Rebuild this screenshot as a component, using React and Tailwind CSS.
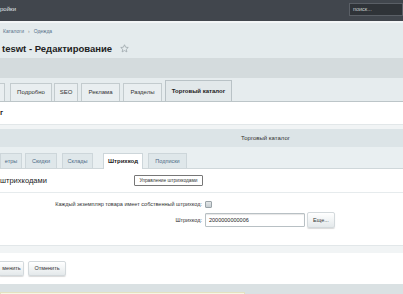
import React from "react";

const topTabs = [
  { label: "", w: "w-[20px]", ml: "-ml-[15px]" },
  { label: "Подробно", w: "w-[42px]", ml: "ml-[5px]" },
  { label: "SEO", w: "w-[24px]", ml: "ml-[2px]" },
  { label: "Реклама", w: "w-[39px]", ml: "ml-[3px]" },
  { label: "Разделы", w: "w-[39px]", ml: "ml-[3px]" },
];

const innerTabs = [
  { label: "етры", w: "w-[22px]", ml: "ml-0" },
  { label: "Скидки", w: "w-[32px]", ml: "ml-[3px]" },
  { label: "Склады", w: "w-[31px]", ml: "ml-[5px]" },
];

const Tab = ({ label, w, ml }) => (
  <div
    className={`${w} ${ml} h-[18px] flex items-center justify-center border border-b-0 border-[#c3cbce] bg-[#e9eef0] text-[6px] text-[#333]`}
  >
    {label}
  </div>
);

const InnerTab = ({ label, w, ml }) => (
  <div
    className={`${w} ${ml} h-[15px] flex items-center justify-center border border-b-0 border-[#cdd6da] bg-[#dfe7ea] text-[5.5px] text-[#4d6a86]`}
  >
    {label}
  </div>
);

const SmallButton = ({ children, className }) => (
  <div
    className={`${className} flex items-center justify-center rounded-[2px] border border-[#d3d9dc] bg-gradient-to-b from-[#ffffff] to-[#e4e9eb] text-[5.5px] text-[#333] shadow-[0_1px_1px_rgba(0,0,0,0.15)]`}
  >
    {children}
  </div>
);

export default function App() {
  return (
    <div
      className="w-[403px] h-[294px] overflow-hidden bg-[#e4ebed]"
      style={{ fontFamily: '"Liberation Sans", Arial, sans-serif' }}
    >
      {/* top bar */}
      <div className="h-[21px] bg-[#41464d] flex items-center justify-between">
        <span className="text-[6px] text-[#e0e3e6] pl-0 -mt-[2px]">ройки</span>
        <div className="w-[54px] h-[13px] -mt-[2px] bg-[#2f3338] border border-[#5a5f66] flex items-center pl-[3px] text-[5.5px] text-[#c8ccd0]">
          поиск...
        </div>
      </div>
      <div className="h-[2px] bg-[#f3f6f7]" />

      {/* header */}
      <div className="h-[35px] pl-[3px] pt-[5px]">
        <div className="flex items-center gap-[4px] text-[5px] text-[#56718a]">
          <span>Каталоги</span>
          <span className="text-[#888]">›</span>
          <span>Одежда</span>
        </div>
        <div className="flex items-center mt-[6px] -ml-[1px]">
          <span className="text-[9.5px] font-bold text-[#222]">teswt - Редактирование</span>
          <svg className="ml-[8px]" width="9" height="9" viewBox="0 0 24 24" fill="none" stroke="#9aa3a8" strokeWidth="2">
            <path d="M12 2l3 6.5 7 .8-5.2 4.8 1.5 7L12 17.5 5.7 21.1l1.5-7L2 9.3l7-.8z" />
          </svg>
        </div>
      </div>

      <div className="h-[20px] bg-[#d4dbdd]" />

      {/* tabs */}
      <div className="h-[23px] flex items-end bg-[#e6ecee]">
        {topTabs.map((t, i) => (
          <Tab key={i} {...t} />
        ))}
        <div className="w-[67px] ml-[3px] h-[21px] flex items-center justify-center border border-b-0 border-[#b9c2c6] bg-[#e2e8ea] text-[6px] font-bold text-[#222]">
          Торговый каталог
        </div>
      </div>

      {/* panel */}
      <div className="bg-white border-t border-[#bcc5c8]">
        <div className="h-[22px] flex items-center text-[7.5px] font-bold text-[#222]">г</div>
        <div className="h-[5px] bg-[#f1f4f5] border-t border-[#e2e7e9]" />
        <div className="h-[18px] bg-[#dce4e7] flex items-center justify-center pl-[128px] text-[6px] text-[#333]">
          Торговый каталог
        </div>

        {/* inner tabs */}
        <div className="h-[22px] flex items-end bg-[#e9eff1] border-b border-[#cfd7da]">
          {innerTabs.map((t, i) => (
            <InnerTab key={i} {...t} />
          ))}
          <div className="w-[40px] ml-[10px] h-[16px] -mb-[1px] flex items-center justify-center border border-b-0 border-[#cdd6da] bg-white text-[6px] font-bold text-[#222]">
            Штрихкод
          </div>
          <InnerTab label="Подписки" w="w-[39px]" ml="ml-[5px]" />
        </div>

        <div className="h-[24px] flex items-center justify-between pr-[200px] border-b border-[#e6ebed]">
          <span className="text-[7.5px] text-[#222]">штрихкодами</span>
          <div className="w-[69px] h-[11px] border border-[#777] rounded-[1px] flex items-center justify-center text-[4.8px] text-[#333] bg-white">
            Управление штрихкодами
          </div>
        </div>

        <div className="h-[52px] pt-[7px]">
          <div className="flex items-center">
            <span className="w-[202px] text-right text-[5.5px] text-[#333]">
              Каждый экземпляр товара имеет собственный штрихкод:
            </span>
            <div className="ml-[3px] w-[7px] h-[7px] rounded-[1px] border border-[#9aa3a8] bg-gradient-to-b from-[#e2e6e8] to-[#c7ced2]" />
          </div>
          <div className="flex items-center mt-[4px]">
            <span className="w-[202px] text-right text-[5.5px] text-[#333]">Штрихкод:</span>
            <div className="ml-[3px] w-[100px] h-[14px] border border-[#b8c0c4] rounded-[1px] bg-white flex items-center pl-[3px] text-[5.5px] text-[#222] shadow-[inset_0_1px_1px_rgba(0,0,0,0.1)]">
              2000000000006
            </div>
            <SmallButton className="ml-[2px] w-[28px] h-[16px]">Еще...</SmallButton>
          </div>
        </div>

        <div className="h-[8px] bg-[#f1f4f5] border-t border-[#e2e7e9]" />
        <div className="h-[31px] flex items-center">
          <SmallButton className="w-[24px] h-[15px] rounded-l-none border-l-0">менить</SmallButton>
          <SmallButton className="ml-[4px] w-[38px] h-[15px]">Отменить</SmallButton>
        </div>
      </div>

      <div className="pt-[8px] bg-[#dae1e3]">
        <div className="w-[245px] h-[10px] bg-[#f7f6e4] border border-[#e4e1c0]" />
      </div>
    </div>
  );
}
